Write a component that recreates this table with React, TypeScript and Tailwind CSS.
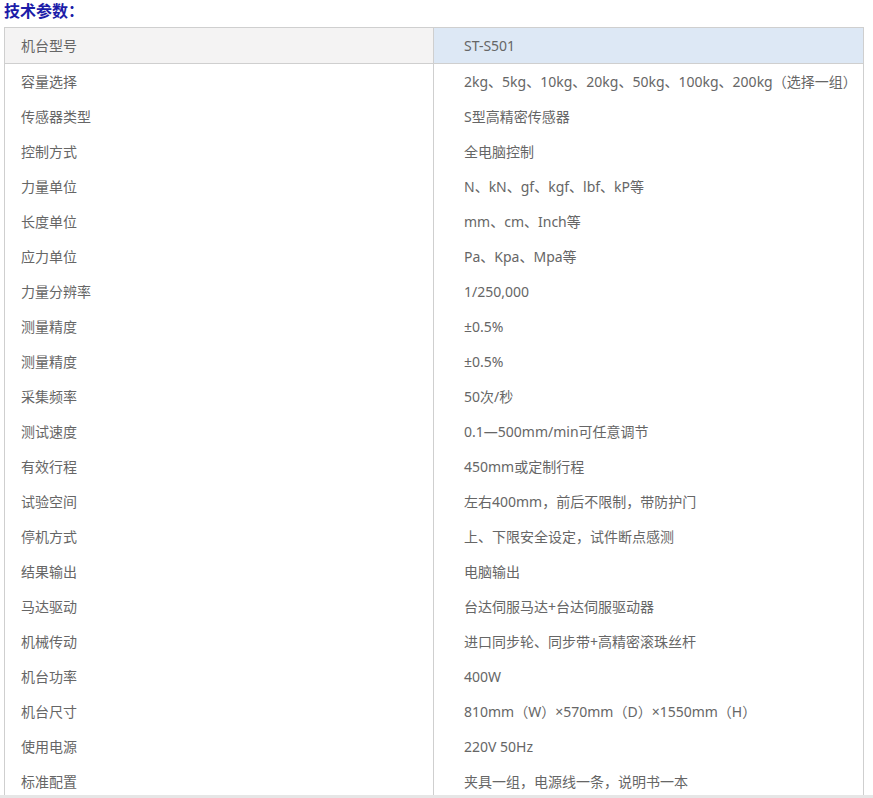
const rows: [string, string][] = [
  ["容量选择", "2kg、5kg、10kg、20kg、50kg、100kg、200kg（选择一组）"],
  ["传感器类型", "S型高精密传感器"],
  ["控制方式", "全电脑控制"],
  ["力量单位", "N、kN、gf、kgf、lbf、kP等"],
  ["长度单位", "mm、cm、Inch等"],
  ["应力单位", "Pa、Kpa、Mpa等"],
  ["力量分辨率", "1/250,000"],
  ["测量精度", "±0.5%"],
  ["测量精度", "±0.5%"],
  ["采集频率", "50次/秒"],
  ["测试速度", "0.1—500mm/min可任意调节"],
  ["有效行程", "450mm或定制行程"],
  ["试验空间", "左右400mm，前后不限制，带防护门"],
  ["停机方式", "上、下限安全设定，试件断点感测"],
  ["结果输出", "电脑输出"],
  ["马达驱动", "台达伺服马达+台达伺服驱动器"],
  ["机械传动", "进口同步轮、同步带+高精密滚珠丝杆"],
  ["机台功率", "400W"],
  ["机台尺寸", "810mm（W）×570mm（D）×1550mm（H）"],
  ["使用电源", "220V 50Hz"],
  ["标准配置", "夹具一组，电源线一条，说明书一本"],
];

export default function App() {
  return (
    <div
      className="w-[873px] h-[798px] flex flex-col overflow-hidden bg-white text-[14px] text-[#666]"
      style={{ fontFamily: '"Noto Sans", "Noto Sans CJK SC", sans-serif' }}
    >
      <div className="flex-1 overflow-hidden">
        <div className="pl-[4px] h-[27px] text-[16px] font-bold text-[#1c1ca8] leading-[22px]">
          技术参数：
        </div>
        <div className="ml-[4px] w-[860px] border-x border-t border-[#cfcfcf]">
          <div className="flex h-[36px] border-b border-[#cfcfcf]">
            <div className="w-[429px] bg-[#f4f3f3] border-r border-[#cfcfcf] pl-[16px] flex items-center">
              机台型号
            </div>
            <div className="flex-1 bg-[#dde8f5] pl-[30px] flex items-center">ST-S501</div>
          </div>
          {rows.map(([k, v], i) => (
            <div key={i} className="flex h-[35px]">
              <div className="w-[429px] border-r border-[#cfcfcf] pl-[16px] flex items-center">{k}</div>
              <div className="flex-1 pl-[30px] flex items-center whitespace-nowrap">{v}</div>
            </div>
          ))}
        </div>
      </div>
      <div className="h-[3px] bg-[#e6e6e6]" />
    </div>
  );
}
